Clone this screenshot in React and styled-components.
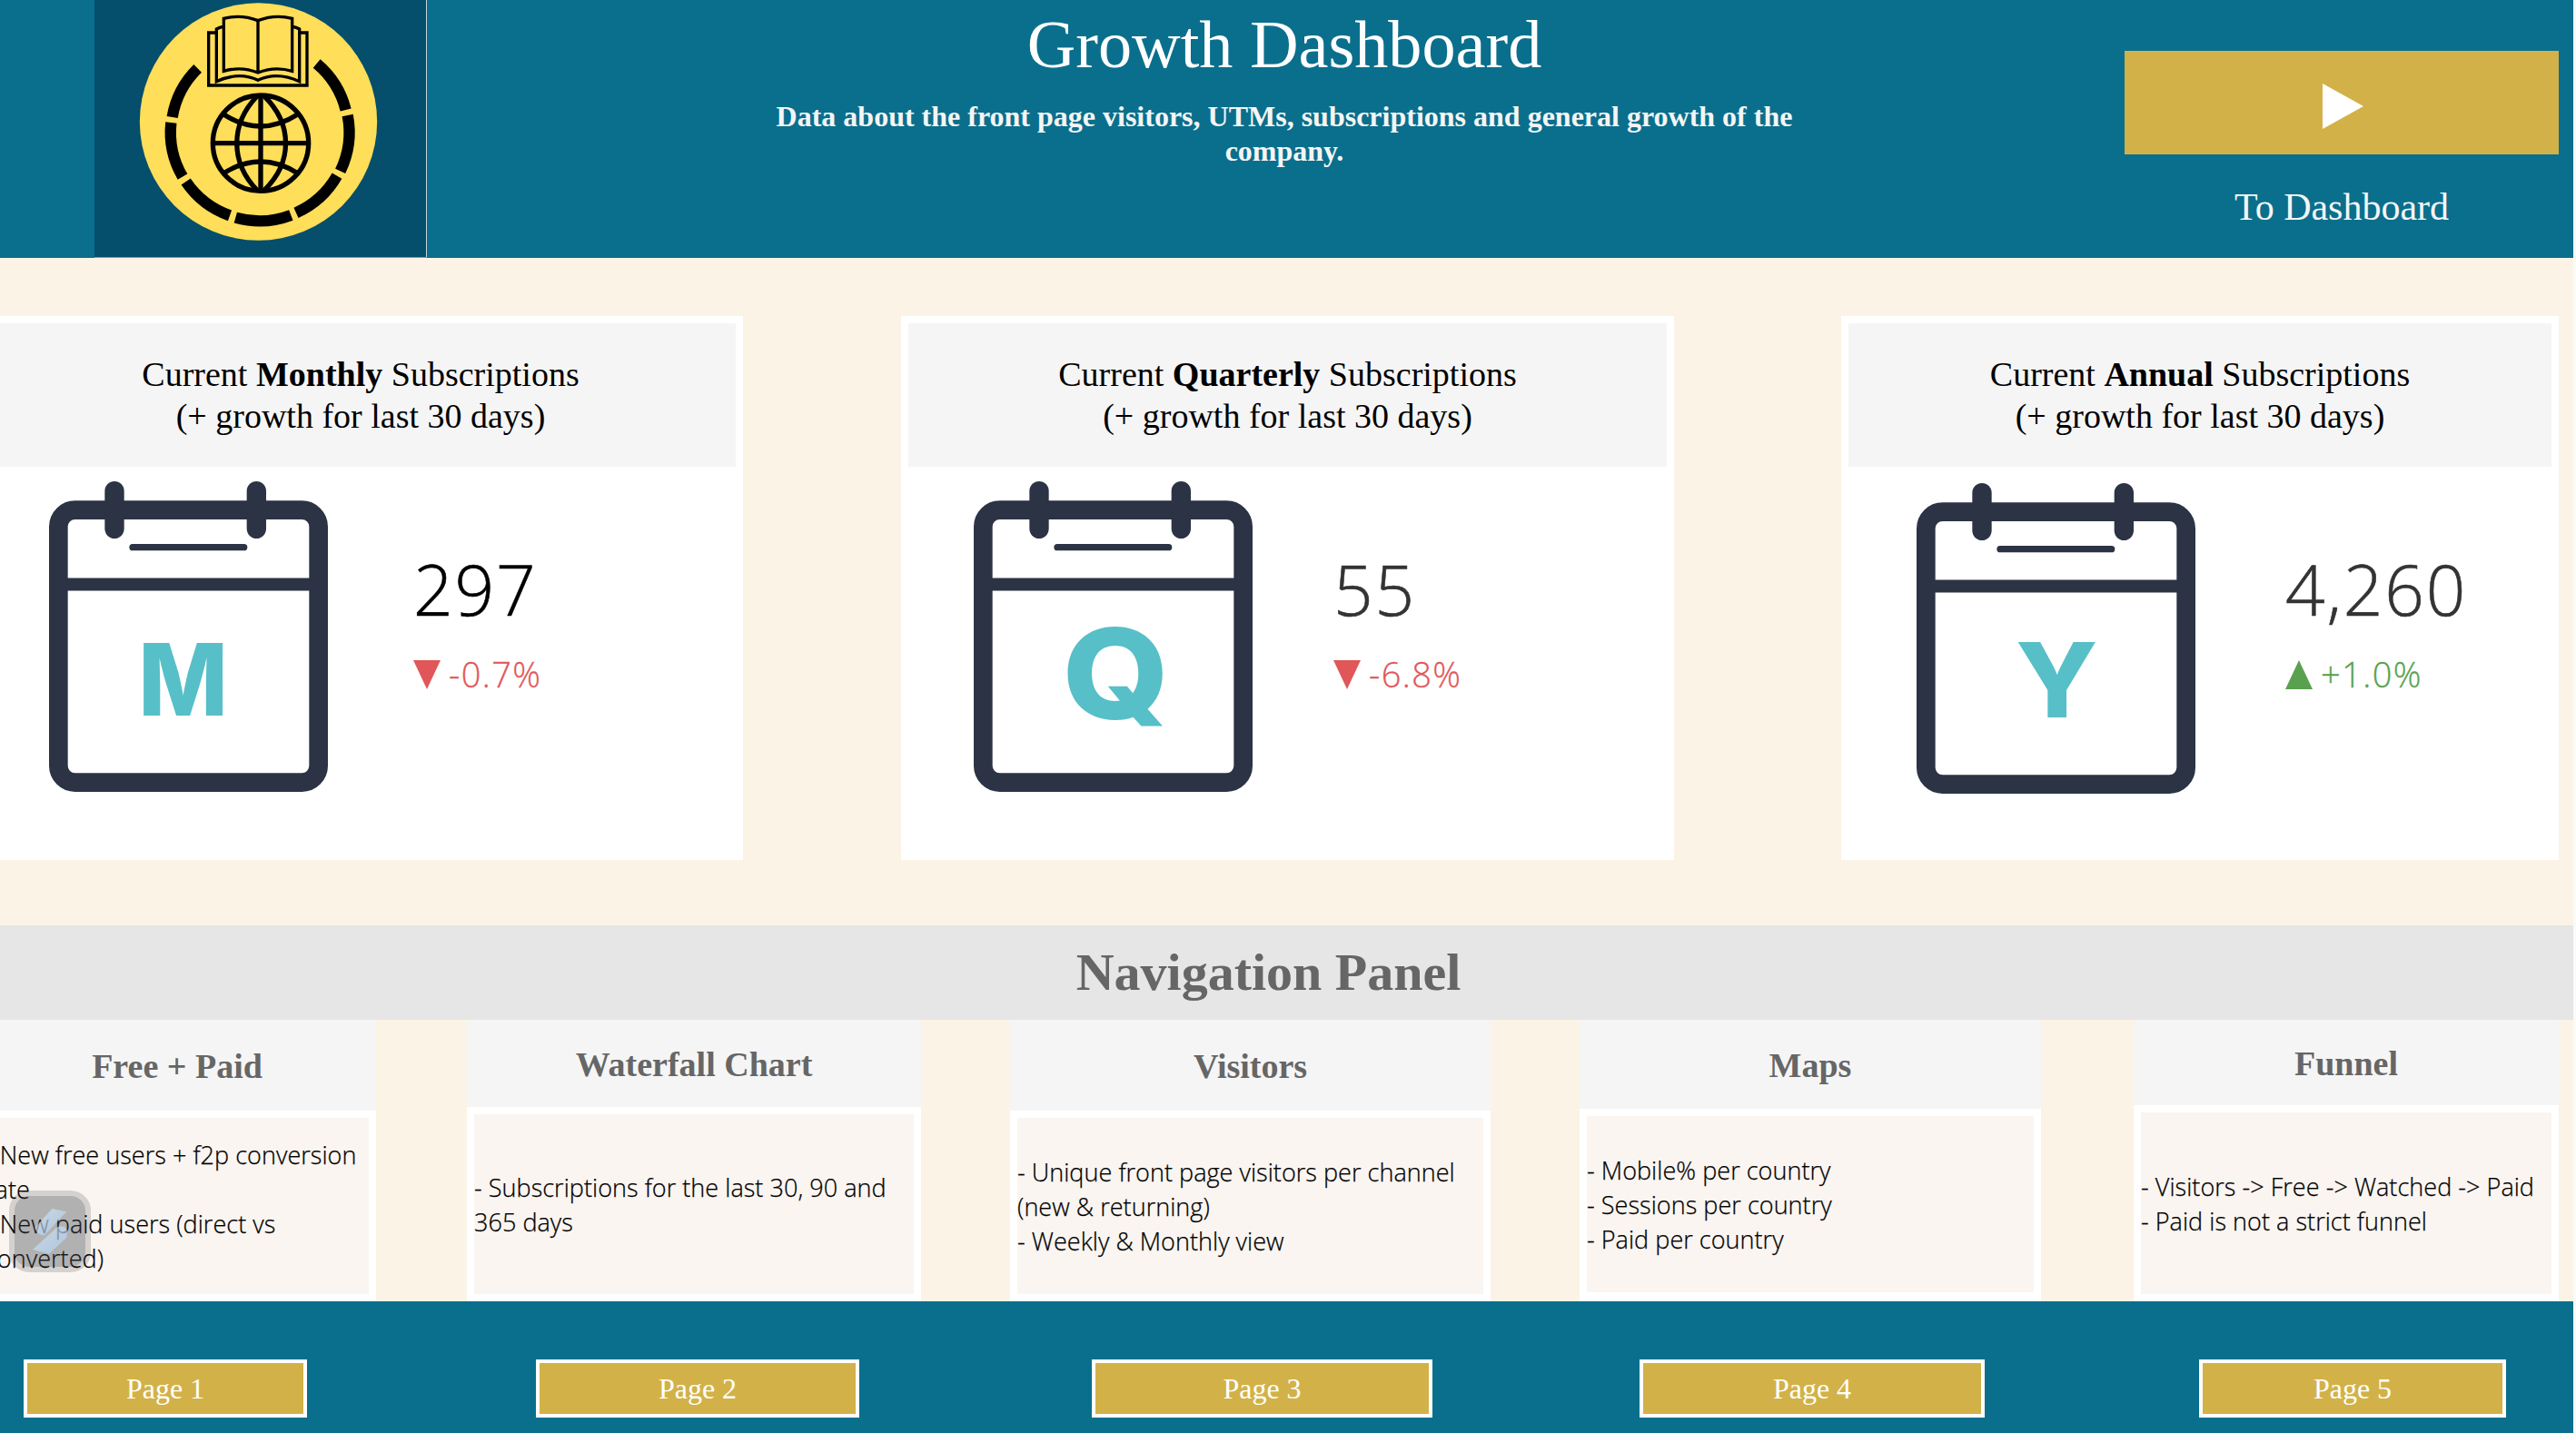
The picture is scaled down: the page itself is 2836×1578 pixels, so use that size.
import React from "react";
import styled, { createGlobalStyle } from "styled-components";

const Global = createGlobalStyle`
  * { box-sizing: border-box; }
  body { margin: 0; background: #fafafa; }
`;

const SERIF = '"Liberation Serif", "Times New Roman", serif';
const SANS = '"Open Sans", "Noto Sans", sans-serif';
const TEAL = "#0a6f8c";
const GOLD = "#d2b248";
const NAVY = "#2b3344";

const Viewport = styled.div`
  position: relative;
  width: 2833px;
  height: 1578px;
  overflow: hidden;
  background: #fbf3e5;
`;

/* The dashboard is scrolled slightly past the left edge of the window. */
const Board = styled.main`
  display: flex;
  flex-direction: column;
  width: 2857px;
  height: 1578px;
  margin-left: -24px;
`;

const Header = styled.header`
  display: flex;
  align-items: flex-start;
  height: 284px;
  padding-left: 128px;
  background: ${TEAL};
`;

const LogoFrame = styled.svg`
  display: block;
  flex: none;
  width: 366px;
  height: 284px;
  background: #054e6c;
`;

const Heading = styled.div`
  width: 1180px;
  margin-left: 354px;
  padding-top: 7px;
  text-align: center;
  font-family: ${SERIF};
  color: #fff;
`;

const Title = styled.h1`
  margin: 0;
  font-size: 74.2px;
  line-height: 84px;
  font-weight: 400;
`;

const Subtitle = styled.p`
  margin: 18px 0 0;
  font-size: 32px;
  line-height: 38px;
  font-weight: 700;
  color: #f5f5f5;
`;

const Launch = styled.div`
  display: flex;
  flex-direction: column;
  align-items: center;
  width: 478px;
  margin-left: 335px;
  padding-top: 56px;
`;

const PlayButton = styled.button`
  display: flex;
  align-items: center;
  width: 100%;
  height: 114px;
  padding: 8px 0 0 218px;
  border: 0;
  background: ${GOLD};
`;

const LaunchLabel = styled.div`
  margin-top: 34px;
  font: 400 42px/48px ${SERIF};
  color: #f5f5f5;
`;

const CardRow = styled.section`
  display: flex;
  height: 735px;
  padding-top: 64px;
`;

const Card = styled.article`
  flex: none;
  width: ${(p) => p.$width}px;
  height: 599px;
  margin-left: ${(p) => p.$gap}px;
  border-top: 8px solid #fff;
  background: #fff;
`;

const CardHeader = styled.div`
  display: flex;
  flex-direction: column;
  justify-content: center;
  height: 158px;
  margin: 0 8px;
  background: #f5f5f5;
  color: #000;
  text-align: center;
  font: 400 38px/46px ${SERIF};
`;

const CardBody = styled.div`
  display: flex;
  align-items: flex-start;
  padding-left: ${(p) => p.$pad}px;
`;

const CalendarSvg = styled.svg`
  display: block;
  flex: none;
  width: 309px;
  height: 344px;
  margin-top: ${(p) => p.$top}px;
`;

const Metric = styled.div`
  margin-left: ${(p) => p.$gap}px;
  padding-top: 94px;
  font-family: ${SANS};
  font-weight: 300;
`;

const Value = styled.div`
  font-size: 76.5px;
  line-height: 80px;
  letter-spacing: 1.8px;
  color: ${(p) => p.$color};
  -webkit-text-stroke: 0.6px currentColor;
`;

const Delta = styled.div`
  display: flex;
  align-items: center;
  gap: 9px;
  height: 32px;
  margin-top: 39px;
  font-size: 38px;
  line-height: 32px;
  letter-spacing: 1.4px;
  color: ${(p) => (p.$up ? "#59a14f" : "#e15759")};
  -webkit-text-stroke: 0.3px currentColor;
`;

const DeltaText = styled.span`
  margin-top: -2px;
`;

const NavHeading = styled.h2`
  display: flex;
  align-items: center;
  justify-content: center;
  height: 104px;
  margin: 0;
  padding-right: 16px;
  background: #e6e6e6;
  font: 700 58px/66px ${SERIF};
  color: #666;
`;

const NavRow = styled.section`
  display: flex;
  height: 310px;
`;

const NavCard = styled.article`
  display: flex;
  flex-direction: column;
  flex: none;
  width: ${(p) => p.$width}px;
  margin-left: ${(p) => p.$gap}px;
  background: #fff;
`;

const NavTitle = styled.h3`
  display: flex;
  align-items: center;
  justify-content: center;
  height: ${(p) => p.$height}px;
  margin: 0;
  padding-top: 2px;
  background: #f5f5f5;
  font: 700 38px/44px ${SERIF};
  color: #666;
`;

const NavBody = styled.div`
  display: flex;
  flex-direction: column;
  justify-content: center;
  flex: 1;
  margin: 8px 8px ${(p) => p.$bottom}px;
  padding-top: 2px;
  background: #faf5f1;
  font: 300 27px/38px ${SANS};
  letter-spacing: 0.04px;
  color: #000;
  -webkit-text-stroke: 0.25px currentColor;
  white-space: nowrap;
`;

const Footer = styled.footer`
  display: flex;
  align-items: flex-start;
  height: 145px;
  padding-top: 64px;
  background: ${TEAL};
`;

const PageButton = styled.button`
  flex: none;
  width: ${(p) => p.$width}px;
  height: 64px;
  margin-left: ${(p) => p.$gap}px;
  padding: 0;
  border: 4px solid #fff;
  background: ${GOLD};
  font: 400 32px/56px ${SERIF};
  color: #fff;
`;

const FloatingBadge = styled.div`
  position: absolute;
  left: 10px;
  top: 1311px;
  width: 90px;
  height: 90px;
  border: 6px solid rgba(0, 0, 0, 0.145);
  border-radius: 22px;
  background: rgba(60, 66, 76, 0.38);
  background-clip: padding-box;
`;

const BadgeGlyph = styled.svg`
  display: block;
  width: 78px;
  height: 78px;
`;

function Logo() {
  return (
    <LogoFrame viewBox="72 0 1098 852">
      <circle cx="613.5" cy="402" r="392" fill="#ffde59" />
      <g fill="none" stroke="#000" strokeWidth="10">
        <path d="M499 61Q556 46 612 68Q668 46 725 61V235Q668 218 612 240Q556 218 499 235ZM612 68V240" />
        <path d="M497 88Q485 90 475 96V269Q550 235 612 265Q674 235 749 269V96Q739 90 727 88" />
        <path d="M475 108H449V282H774V108H749" />
      </g>
      <g fill="none" stroke="#000" strokeWidth="16">
        <circle cx="621" cy="473" r="158" />
        <path d="M621 315V631M463 473H779" />
        <path d="M609 318C520 410 520 536 609 628M633 318C727 410 727 536 633 628" />
        <path d="M499 378Q621 456 743 378M499 572Q621 496 743 572" />
      </g>
      <g fill="none" stroke="#000" strokeWidth="37">
        <path d="M413 226A293 293 0 0 0 329 387" />
        <path d="M325 405A293 293 0 0 0 363 584" />
        <path d="M374 600A293 293 0 0 0 519 712" />
        <path d="M538 719A293 293 0 0 0 721 711" />
        <path d="M738 703A293 293 0 0 0 873 581" />
        <path d="M884 565A293 293 0 0 0 908 381" />
        <path d="M902 363A293 293 0 0 0 806 210" />
      </g>
      <path d="M1168.5 0V852" stroke="#c3d3da" strokeWidth="3" />
      <path d="M72 850.5H1170" stroke="#6f9db1" strokeWidth="3" />
    </LogoFrame>
  );
}

function Calendar({ letter, top }) {
  return (
    <CalendarSvg viewBox="33 27 927 1032" $top={top}>
      <rect x="67" y="125" width="859" height="900" rx="55" fill="none" stroke={NAVY} strokeWidth="62" />
      <g stroke={NAVY} strokeLinecap="round">
        <path d="M252 62V187M721 62V187" strokeWidth="64" />
        <path d="M312 248H680" strokeWidth="22" />
      </g>
      <path d="M90 370.500H905" stroke={NAVY} strokeWidth="42" />
      <text
        x={letter.x}
        y={letter.y}
        fontFamily="Inter, sans-serif"
        fontWeight={letter.weight}
        fontSize={letter.size}
        textLength={letter.length}
        lengthAdjust="spacingAndGlyphs"
        textAnchor="middle"
        fill="#57bfc8"
      >
        {letter.char}
      </text>
    </CalendarSvg>
  );
}

function DeltaArrow({ up }) {
  return (
    <svg width="30" height="32" viewBox="0 0 30 32">
      <path d={up ? "M15 0L30 32H0Z" : "M0 0H30L15 32Z"} fill={up ? "#59a14f" : "#e15759"} />
    </svg>
  );
}

const cards = [
  {
    period: "Monthly", width: 842, gap: 0, pad: 77, top: 15, metricGap: 93,
    value: "297", color: "#000", delta: "-0.7%",
    letter: { char: "M", x: 479, y: 804, size: 331, length: 296, weight: 800 },
  },
  {
    period: "Quarterly", width: 851, gap: 174, pad: 79, top: 15, metricGap: 88,
    value: "55", color: "#333", delta: "-6.8%",
    letter: { char: "Q", x: 505, y: 817, size: 417, length: 353, weight: 800 },
  },
  {
    period: "Annual", width: 790, gap: 184, pad: 82, top: 17, metricGap: 98,
    value: "4,260", color: "#333", delta: "+1.0%", up: true,
    letter: { char: "Y", x: 499, y: 804, size: 342, length: 272, weight: 800 },
  },
];

const navCards = [
  { title: "Free + Paid", width: 438, gap: 0, head: 100, bottom: 8,
    lines: ["- New free users + f2p conversion", "rate", "- New paid users (direct vs", "converted)"] },
  { title: "Waterfall Chart", width: 500, gap: 100, head: 96, bottom: 8,
    lines: ["- Subscriptions for the last 30, 90 and", "365 days"] },
  { title: "Visitors", width: 529, gap: 98, head: 100, bottom: 8,
    lines: ["- Unique front page visitors per channel", "(new & returning)", "- Weekly & Monthly view"] },
  { title: "Maps", width: 508, gap: 98, head: 98, bottom: 10,
    lines: ["- Mobile% per country", "- Sessions per country", "- Paid per country"] },
  { title: "Funnel", width: 468, gap: 102, head: 94, bottom: 8,
    lines: ["- Visitors -> Free -> Watched -> Paid", "- Paid is not a strict funnel"] },
];

const pages = [
  { label: "Page 1", width: 312, gap: 50 },
  { label: "Page 2", width: 356, gap: 252 },
  { label: "Page 3", width: 375, gap: 256 },
  { label: "Page 4", width: 380, gap: 228 },
  { label: "Page 5", width: 338, gap: 236 },
];

export default function App() {
  return (
    <Viewport>
      <Global />
      <Board>
        <Header>
          <Logo />
          <Heading>
            <Title>Growth Dashboard</Title>
            <Subtitle>
              Data about the front page visitors, UTMs, subscriptions and general growth of the company.
            </Subtitle>
          </Heading>
          <Launch>
            <PlayButton aria-label="To Dashboard">
              <svg width="45" height="50" viewBox="0 0 45 50">
                <path d="M0 0L45 25L0 50Z" fill="#fff" />
              </svg>
            </PlayButton>
            <LaunchLabel>To Dashboard</LaunchLabel>
          </Launch>
        </Header>

        <CardRow>
          {cards.map((c) => (
            <Card key={c.period} $width={c.width} $gap={c.gap}>
              <CardHeader>
                <div>Current <b>{c.period}</b> Subscriptions</div>
                <div>(+ growth for last 30 days)</div>
              </CardHeader>
              <CardBody $pad={c.pad}>
                <Calendar letter={c.letter} top={c.top} />
                <Metric $gap={c.metricGap}>
                  <Value $color={c.color}>{c.value}</Value>
                  <Delta $up={c.up}>
                    <DeltaArrow up={c.up} />
                    <DeltaText>{c.delta}</DeltaText>
                  </Delta>
                </Metric>
              </CardBody>
            </Card>
          ))}
        </CardRow>

        <NavHeading>Navigation Panel</NavHeading>
        <NavRow>
          {navCards.map((n) => (
            <NavCard key={n.title} $width={n.width} $gap={n.gap}>
              <NavTitle $height={n.head}>{n.title}</NavTitle>
              <NavBody $bottom={n.bottom}>
                {n.lines.map((line) => (
                  <div key={line}>{line}</div>
                ))}
              </NavBody>
            </NavCard>
          ))}
        </NavRow>

        <Footer>
          {pages.map((p) => (
            <PageButton key={p.label} $width={p.width} $gap={p.gap}>{p.label}</PageButton>
          ))}
        </Footer>
      </Board>

      <FloatingBadge>
        <BadgeGlyph viewBox="48 291 234 234">
          <defs>
            <linearGradient id="bolt" x1="0" y1="0" x2="1" y2="1">
              <stop offset="0" stopColor="#dcefff" />
              <stop offset="1" stopColor="#acd6ff" />
            </linearGradient>
          </defs>
          <g fill="url(#bolt)" fillOpacity="0.6">
            <path d="M172 333L220 343L147 421Q122 420 115 396Z" />
            <path d="M190 393Q216 388 222 404L220 428L162 482L108 468Z" />
          </g>
        </BadgeGlyph>
      </FloatingBadge>
    </Viewport>
  );
}
